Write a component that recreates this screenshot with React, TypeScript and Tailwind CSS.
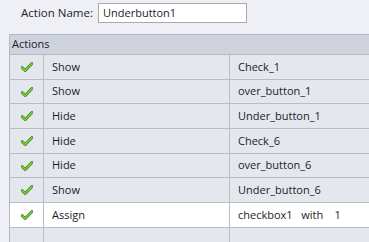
const rows = [
  { action: "Show", target: "Check_1" },
  { action: "Show", target: "over_button_1" },
  { action: "Hide", target: "Under_button_1" },
  { action: "Hide", target: "Check_6" },
  { action: "Hide", target: "over_button_6" },
  { action: "Show", target: "Under_button_6" },
  { action: "Assign", target: "checkbox1\u00a0\u00a0\u00a0with\u00a0\u00a0\u00a0\u00a01", selected: true },
]

function Check() {
  return (
    <svg width="12" height="10" viewBox="0 0 12 10">
      <path d="M1 5.5 L4.2 8.5 L11 1.5" fill="none" stroke="#3f8a1c" strokeWidth="3" strokeLinecap="round" strokeLinejoin="round" />
      <path d="M1 5.5 L4.2 8.5 L11 1.5" fill="none" stroke="#7ed03a" strokeWidth="1.4" strokeLinecap="round" strokeLinejoin="round" />
    </svg>
  )
}

export default function App() {
  return (
    <div className="w-[369px] h-[242px] overflow-hidden bg-[#eff0f5] text-[11px] text-[#1c1c28]" style={{ fontFamily: '"Open Sans", "Liberation Sans", sans-serif' }}>
      <div className="flex items-center h-[20px] mt-[3px]">
        <div className="w-[98px] shrink-0 pl-[21px] text-[11.5px] whitespace-nowrap">Action Name:</div>
        <div className="w-[149px] shrink-0 h-[20px] border border-[#a7a9ae] bg-white flex items-center pl-[4px]">Underbutton1</div>
      </div>
      <div className="ml-[9px] mt-[11px] border-l border-t border-[#b4b8c2] w-[400px]">
        <div className="h-[20px] bg-[#cfd3dd] border-b border-[#b4b8c2] flex items-center pl-[2px]">Actions</div>
        {rows.map((r, i) => (
          <div key={i} className={`flex h-[24.7px] border-b border-[#b9bcc5] ${r.selected ? "bg-white" : "bg-[#e5e7ee]"}`}>
            <div className="w-[34px] border-r border-[#b9bcc5] flex items-center justify-center">
              <Check />
            </div>
            <div className="w-[186px] border-r border-[#b9bcc5] flex items-center pl-[8px]">{r.action}</div>
            <div className="flex-1 flex items-center pl-[8px]">{r.target}</div>
          </div>
        ))}
        <div className="flex h-[24px] bg-[#e5e7ee]">
          <div className="w-[34px] border-r border-[#b9bcc5]" />
          <div className="w-[186px] border-r border-[#b9bcc5]" />
          <div className="flex-1" />
        </div>
      </div>
    </div>
  )
}
